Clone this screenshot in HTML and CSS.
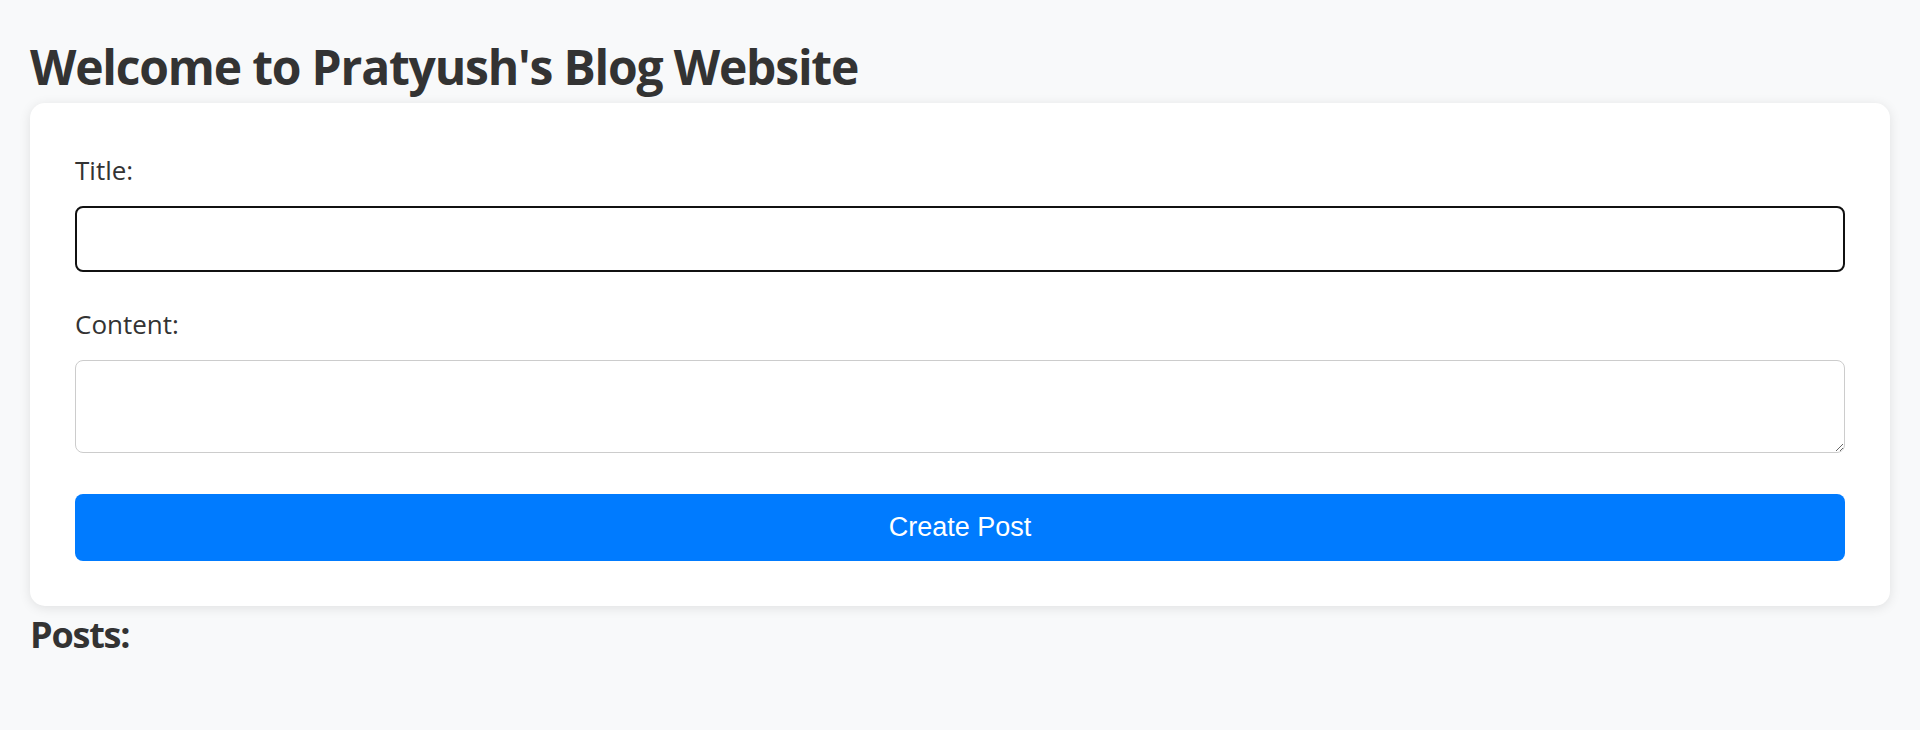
FILE: index.html
```html
<!DOCTYPE html>
<html lang="en">
<head>
<meta charset="utf-8">
<title>Pratyush's Blog</title>
<link rel="stylesheet" href="styles.css">
</head>
<body>
<h1 class="page-title">Welcome to Pratyush's Blog Website</h1>
<form class="post-form">
  <label class="field-label" for="title">Title:</label>
  <input class="field-input" id="title" type="text">
  <label class="field-label" for="content">Content:</label>
  <textarea class="field-textarea" id="content"></textarea>
  <button class="submit-btn" type="button">Create Post</button>
</form>
<h2 class="posts-title">Posts:</h2>
</body>
</html>
```

FILE: styles.css
```css
html, body {
  margin: 0;
  background: #f8f9fa;
}
body {
  padding: 0 30px;
  font-family: "Open Sans", "Noto Sans", sans-serif;
  color: #333;
}
.page-title {
  font-size: 48px;
  line-height: 64px;
  font-weight: 700;
  letter-spacing: -1.2px;
  margin: 35px 0 4px;
}
.post-form {
  background: #fff;
  border-radius: 15px;
  box-shadow: 0 2px 12px rgba(0, 0, 0, 0.1);
  padding: 45px;
  display: flex;
  flex-direction: column;
}
.field-label {
  font-size: 26px;
  line-height: 36px;
  padding-top: 4px;
  margin-bottom: 18px;
}
.field-input {
  box-sizing: border-box;
  height: 66px;
  border: 2.5px solid #111;
  border-radius: 8px;
  margin: 0 0 30px;
  padding: 0 15px;
  font-size: 24px;
  outline: none;
}
.field-textarea {
  box-sizing: border-box;
  height: 93px;
  border: 1.5px solid #ccc;
  border-radius: 8px;
  margin: 0 0 41px;
  padding: 15px;
  font-size: 24px;
  resize: vertical;
}
.submit-btn {
  height: 67px;
  border: none;
  border-radius: 8px;
  background: #007bff;
  color: #fff;
  font-family: "Liberation Sans", Arial, sans-serif;
  font-size: 27px;
  cursor: pointer;
}
.posts-title {
  font-size: 36px;
  line-height: 48px;
  font-weight: 700;
  letter-spacing: -1.2px;
  margin: 5px 0 0;
}
```
